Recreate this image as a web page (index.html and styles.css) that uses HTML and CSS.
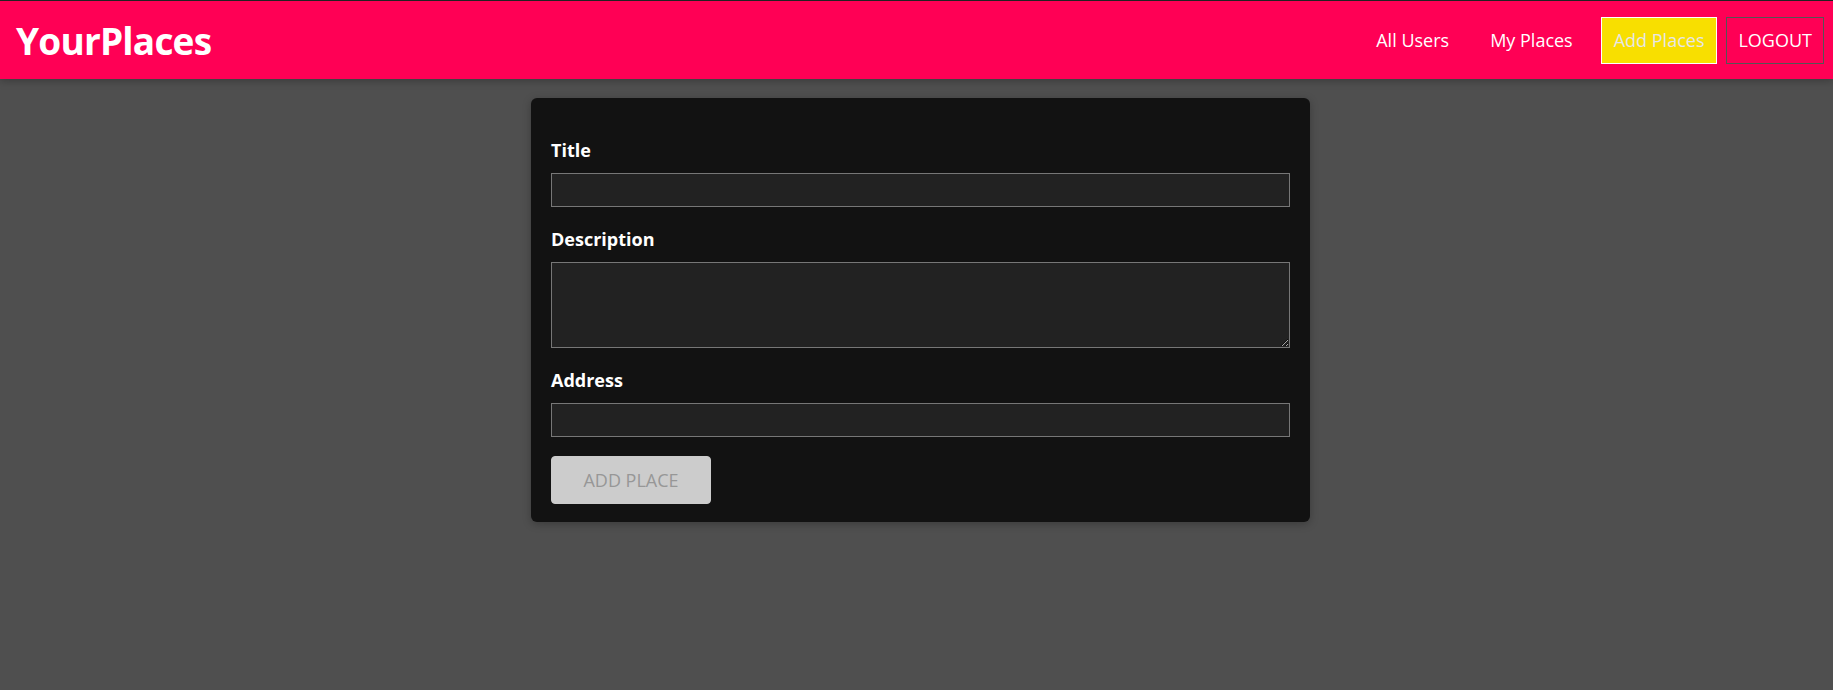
FILE: index.html
```html
<!DOCTYPE html>
<html lang="en">
<head>
<meta charset="utf-8">
<title>YourPlaces</title>
<link rel="stylesheet" href="styles.css">
</head>
<body>
<header class="main-header">
  <h1 class="logo">YourPlaces</h1>
  <nav class="nav">
    <a class="nav-link" href="#">All Users</a>
    <a class="nav-link" href="#">My Places</a>
    <a class="nav-link active" href="#">Add Places</a>
    <button class="logout">LOGOUT</button>
  </nav>
</header>
<main class="page">
  <form class="place-form">
    <div class="form-control">
      <label class="label" for="title">Title</label>
      <input class="field" id="title" type="text">
    </div>
    <div class="form-control">
      <label class="label" for="description">Description</label>
      <textarea class="field area" id="description" rows="3"></textarea>
    </div>
    <div class="form-control">
      <label class="label" for="address">Address</label>
      <input class="field" id="address" type="text">
    </div>
    <button class="submit" type="submit" disabled>ADD PLACE</button>
  </form>
</main>
</body>
</html>
```
FILE: styles.css
```css
* { box-sizing: border-box; }
html, body { margin: 0; padding: 0; }
body {
  background: #4f4f4f;
  font-family: "Open Sans", "Noto Sans", sans-serif;
  height: 690px;
  overflow: hidden;
}
.main-header {
  height: 79px;
  background: #ff0055;
  border-top: 1px solid #222;
  box-shadow: 0 2px 8px rgba(0, 0, 0, 0.26);
  display: flex;
  align-items: center;
  justify-content: space-between;
  padding: 0 9px 0 16px;
}
.logo {
  margin: 0;
  color: #fff;
  font-size: 37px;
  font-weight: 700;
  letter-spacing: -0.8px;
}
.nav {
  display: flex;
  align-items: center;
  gap: 9px;
}
.nav-link {
  color: #fff;
  text-decoration: none;
  font-size: 18px;
  padding: 12px 12px;
  border: 1px solid transparent;
  margin-left: 6px;
}
.nav-link.active {
  background: #f8df00;
  border-color: #fff;
  color: #e6e6e6;
  padding: 12px 12px;
  height: 47px;
  display: flex;
  align-items: center;
}
.logout {
  font-family: inherit;
  font-size: 18px;
  color: #fff;
  background: transparent;
  border: 1px solid #555;
  height: 47px;
  padding: 0 11px;
}
.page {
  display: flex;
  justify-content: center;
  padding-top: 19px;
  padding-left: 8px;
}
.place-form {
  width: 779px;
  background: #121212;
  border-radius: 6px;
  box-shadow: 0 2px 8px rgba(0, 0, 0, 0.26);
  padding: 20px 20px 18px;
  display: flex;
  flex-direction: column;
}
.form-control {
  display: flex;
  flex-direction: column;
  margin-top: 21px;
}
.form-control + .form-control { margin-top: 21px; }
.label {
  color: #fff;
  font-weight: 700;
  font-size: 18px;
  line-height: 22px;
  margin-bottom: 12px;
}
.field {
  height: 34px;
  background: #222;
  border: 1px solid #777;
  color: #fff;
  font-family: inherit;
  font-size: 16px;
  padding: 4px 6px;
  outline: none;
}
.field.area {
  height: 86px;
  resize: vertical;
}
.submit {
  align-self: flex-start;
  margin-top: 19px;
  width: 160px;
  height: 48px;
  background: #ccc;
  color: #979797;
  border: 1px solid #ccc;
  border-radius: 4px;
  font-family: inherit;
  font-size: 18px;
}
```
